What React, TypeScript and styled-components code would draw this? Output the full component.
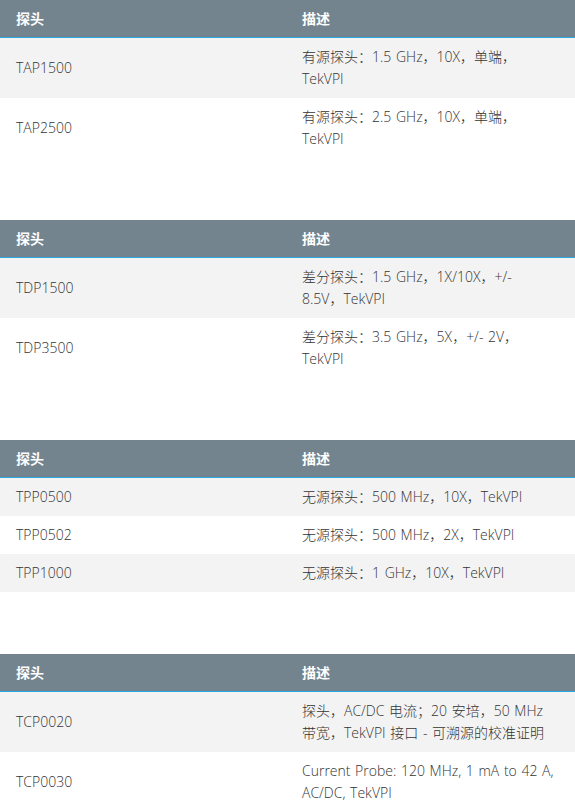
import styled, { createGlobalStyle } from "styled-components";
import { Fragment } from "react";

const GlobalStyle = createGlobalStyle`
  html, body {
    margin: 0;
    padding: 0;
    background: #fff;
  }
  body {
    font-family: "Open Sans", "Noto Sans CJK SC", sans-serif;
    font-size: 14px;
    color: #333;
  }
`;

type Row = { model: string; desc: string[] };

const tables: Row[][] = [
  [
    { model: "TAP1500", desc: ["有源探头：1.5 GHz，10X，单端，", "TekVPI"] },
    { model: "TAP2500", desc: ["有源探头：2.5 GHz，10X，单端，", "TekVPI"] },
  ],
  [
    { model: "TDP1500", desc: ["差分探头：1.5 GHz，1X/10X，+/-", "8.5V，TekVPI"] },
    { model: "TDP3500", desc: ["差分探头：3.5 GHz，5X，+/- 2V，", "TekVPI"] },
  ],
  [
    { model: "TPP0500", desc: ["无源探头：500 MHz，10X，TekVPI"] },
    { model: "TPP0502", desc: ["无源探头：500 MHz，2X，TekVPI"] },
    { model: "TPP1000", desc: ["无源探头：1 GHz，10X，TekVPI"] },
  ],
  [
    {
      model: "TCP0020",
      desc: ["探头，AC/DC 电流；20 安培，50 MHz", "带宽，TekVPI 接口 - 可溯源的校准证明"],
    },
    { model: "TCP0030", desc: ["Current Probe: 120 MHz, 1 mA to 42 A,", "AC/DC, TekVPI"] },
  ],
];

const Page = styled.div`
  display: flex;
  flex-direction: column;
  gap: 62px;
  width: 575px;
`;

const Table = styled.table`
  width: 100%;
  border-collapse: collapse;
  table-layout: fixed;
`;

const HeadCell = styled.th`
  background: #74848f;
  color: #fff;
  font-weight: 700;
  text-align: left;
  line-height: 22px;
  padding: 8px 16px 7px;
  border-bottom: 1px solid #29a9df;
`;

const BodyRow = styled.tr`
  &:nth-child(odd) {
    background: #f3f3f3;
  }
`;

const Cell = styled.td<{ $wide?: boolean }>`
  padding: 8px ${(p) => (p.$wide ? "8px" : "16px")} 8px 16px;
  line-height: 22px;
  font-weight: 300;
  word-spacing: 1px;
  vertical-align: middle;
  white-space: nowrap;
`;

export default function App() {
  return (
    <>
      <GlobalStyle />
      <Page>
        {tables.map((rows, i) => (
          <Table key={i}>
            <colgroup>
              <col style={{ width: 286 }} />
              <col />
            </colgroup>
            <thead>
              <tr>
                <HeadCell>探头</HeadCell>
                <HeadCell>描述</HeadCell>
              </tr>
            </thead>
            <tbody>
              {rows.map((r) => (
                <BodyRow key={r.model}>
                  <Cell>{r.model}</Cell>
                  <Cell $wide>
                    {r.desc.map((line, j) => (
                      <Fragment key={j}>
                        {j > 0 && <br />}
                        {line}
                      </Fragment>
                    ))}
                  </Cell>
                </BodyRow>
              ))}
            </tbody>
          </Table>
        ))}
      </Page>
    </>
  );
}
